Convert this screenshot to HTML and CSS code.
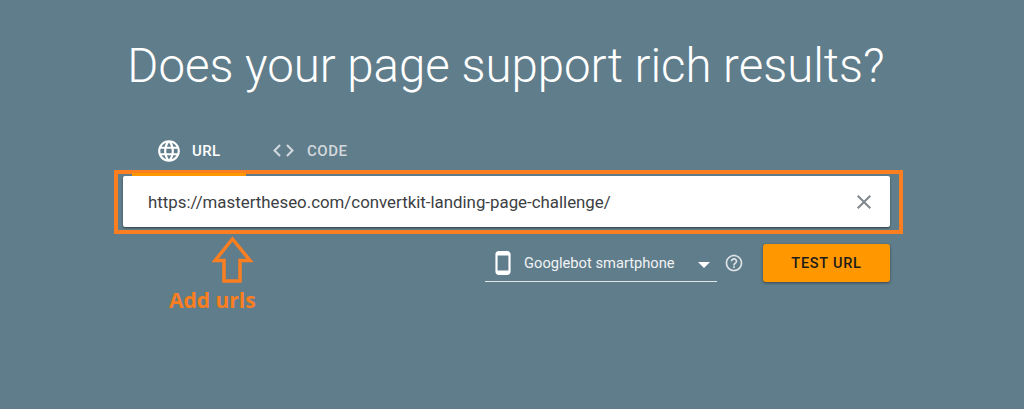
FILE: index.html
```html
<!DOCTYPE html>
<html lang="en">
<head>
<meta charset="utf-8">
<title>Rich Results Test</title>
<link rel="stylesheet" href="styles.css">
</head>
<body>
<main class="page">
  <h1 class="title">Does your page support rich results?</h1>
  <div class="panel">
    <nav class="tabs">
      <div class="tab tab-active">
        <svg class="tab-icon" viewBox="0 0 24 24" width="26" height="26"><path fill="#fff" d="M11.99 2C6.47 2 2 6.48 2 12s4.47 10 9.99 10C17.52 22 22 17.52 22 12S17.52 2 11.99 2zm6.93 6h-2.95c-.32-1.25-.78-2.45-1.38-3.56 1.84.63 3.37 1.91 4.33 3.56zM12 4.04c.83 1.2 1.48 2.53 1.91 3.96h-3.82c.43-1.43 1.08-2.76 1.91-3.96zM4.26 14C4.1 13.36 4 12.69 4 12s.1-1.36.26-2h3.38c-.08.66-.14 1.32-.14 2s.06 1.34.14 2H4.26zm.82 2h2.95c.32 1.25.78 2.45 1.38 3.56-1.84-.63-3.37-1.9-4.33-3.56zm2.95-8H5.08c.96-1.66 2.49-2.93 4.33-3.56C8.81 5.55 8.35 6.75 8.03 8zM12 19.96c-.83-1.2-1.48-2.53-1.91-3.96h3.82c-.43 1.43-1.08 2.76-1.91 3.96zM14.34 14H9.66c-.09-.66-.16-1.32-.16-2s.07-1.35.16-2h4.68c.09.65.16 1.32.16 2s-.07 1.34-.16 2zm.25 5.56c.6-1.11 1.06-2.31 1.38-3.56h2.95c-.96 1.65-2.49 2.93-4.33 3.56zM16.36 14c.08-.66.14-1.32.14-2s-.06-1.34-.14-2h3.38c.16.64.26 1.31.26 2s-.1 1.36-.26 2h-3.38z"/></svg>
        <span>URL</span>
      </div>
      <div class="tab tab-code">
        <svg class="tab-icon" viewBox="0 0 24 24" width="25" height="25"><path fill="#d3d9dd" d="M9.4 16.6 4.8 12l4.6-4.6L8 6l-6 6 6 6 1.4-1.4zm5.2 0 4.6-4.6-4.6-4.6L16 6l6 6-6 6-1.4-1.4z"/></svg>
        <span>CODE</span>
      </div>
    </nav>
    <div class="highlight">
      <div class="input-box">
        <span class="url-text">https://mastertheseo.com/convertkit-landing-page-challenge/</span>
        <svg class="clear" viewBox="0 0 24 24" width="24" height="24"><path fill="#80868b" d="M19 6.41 17.59 5 12 10.59 6.41 5 5 6.41 10.59 12 5 17.59 6.41 19 12 13.41 17.59 19 19 17.59 13.41 12z"/></svg>
      </div>
      <div class="tab-underline"></div>
    </div>
    <div class="below">
      <div class="note">
        <svg class="arrow" viewBox="0 0 42 50" width="42" height="50"><path fill="none" stroke="#fb7e21" stroke-width="3.5" d="M20.500 4 38 25.500H28V46H12V25.500H3Z"/></svg>
        <span class="note-text">Add urls</span>
      </div>
      <div class="controls">
        <div class="select">
          <svg class="phone" viewBox="0 0 24 24" width="26" height="26"><path fill="#fff" d="M16 1H8C6.340 1 5 2.340 5 4v16c0 1.660 1.340 3 3 3h8c1.660 0 3-1.340 3-3V4c0-1.660-1.340-3-3-3zm1 18H7V5h10v14z"/></svg>
          <span class="select-label">Googlebot smartphone</span>
          <span class="caret"></span>
        </div>
        <svg class="help" viewBox="0 0 24 24" width="20" height="20"><path fill="#dfe3e6" d="M11 18h2v-2h-2v2zm1-16C6.480 2 2 6.480 2 12s4.480 10 10 10 10-4.480 10-10S17.520 2 12 2zm0 18c-4.410 0-8-3.590-8-8s3.590-8 8-8 8 3.590 8 8-3.590 8-8 8zm0-14c-2.210 0-4 1.790-4 4h2c0-1.100.9-2 2-2s2 .9 2 2c0 2-3 1.750-3 5h2c0-2.250 3-2.500 3-5 0-2.210-1.790-4-4-4z"/></svg>
        <button class="test-btn">TEST URL</button>
      </div>
    </div>
  </div>
</main>
</body>
</html>
```
FILE: styles.css
```css
* { box-sizing: border-box; }
html, body { margin: 0; height: 100%; }
body {
  background: #607d8b;
  font-family: Roboto, "Liberation Sans", sans-serif;
  overflow: hidden;
}
.page { display: flex; flex-direction: column; align-items: center; height: 409px; }
.title {
  margin: 35px 12px 0 0;
  height: 62px;
  font-size: 47.400px;
  line-height: 62px;
  font-weight: 300;
  color: #fff;
  white-space: nowrap;
}
.panel { width: 789px; margin-top: 30px; margin-left: -7px; }
.tabs { display: flex; height: 43px; padding-left: 17px; padding-top: 4px; }
.tab {
  display: flex;
  align-items: center;
  height: 39px;
  font-size: 15px;
  font-weight: 500;
  letter-spacing: .35px;
  color: #fff;
}
.tab-icon { margin-right: 10px; }
.tab-active { width: 114px; padding-left: 25px; }
.tab-code { color: #d3d9dd; padding-left: 26px; }
.tab-code span { margin-left: 1px; letter-spacing: .5px; }
.highlight {
  position: relative;
  height: 64px;
  border: 4px solid #fb7e21;
  padding: 2px 9px 2px 5px;
}
.input-box {
  display: flex;
  align-items: center;
  justify-content: space-between;
  height: 51px;
  padding: 0 14px 0 25px;
  background: #fff;
  border-radius: 2px;
  box-shadow: 0 1px 2px rgba(0,0,0,.5);
}
.url-text { font-size: 16.850px; color: #3c4043; white-space: nowrap; }
.tab-underline {
  position: absolute;
  left: 14px;
  top: -1px;
  width: 114px;
  height: 3px;
  background: #ff9800;
}
.below { display: flex; justify-content: space-between; padding-right: 13px; }
.note { display: flex; flex-direction: column; align-items: flex-start; margin-left: 55px; margin-top: 1px; }
.arrow { margin-left: 43px; }
.note-text {
  margin-top: 2px;
  font-family: "Open Sans", sans-serif;
  font-size: 21px;
  font-weight: 700;
  line-height: 27px;
  color: #fb7e21;
  white-space: nowrap;
}
.controls { display: flex; align-items: flex-start; margin-top: 10px; }
.select {
  display: flex;
  align-items: center;
  width: 232px;
  height: 38px;
  padding-left: 5px;
  border-bottom: 1px solid #dfe5e8;
  color: #f1f3f4;
}
.phone { flex: none; margin-right: 8px; }
.select-label { font-size: 14.700px; font-weight: 400; white-space: nowrap; }
.caret {
  margin: 4px 7px 0 auto;
  width: 0; height: 0;
  border-left: 6px solid transparent;
  border-right: 6px solid transparent;
  border-top: 6px solid #fff;
}
.help { margin: 9px 0 0 7px; }
.test-btn {
  width: 127px;
  height: 38px;
  margin-left: 19px;
  border: 0;
  border-radius: 3px;
  background: #ff9800;
  color: #1b1b1b;
  font-family: Roboto, sans-serif;
  font-size: 14.500px;
  font-weight: 500;
  letter-spacing: .75px;
  box-shadow: 0 1px 3px rgba(0,0,0,.45);
}
```
